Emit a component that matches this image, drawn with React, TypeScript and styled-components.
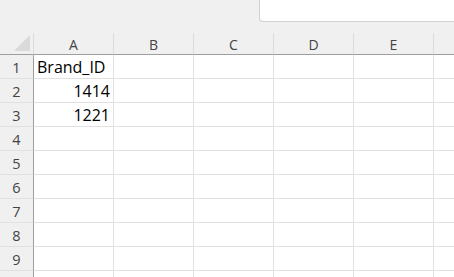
import React from "react"
import styled, { createGlobalStyle } from "styled-components"

const GlobalStyle = createGlobalStyle`
	html, body {
		margin: 0;
		padding: 0;
		background: #f0f0f0;
		overflow: hidden;
	}
	body {
		font-family: "Open Sans", "Noto Sans", sans-serif;
	}
`

// F is only partly on screen, its label falls outside the window
const columns = ["A", "B", "C", "D", "E", ""]
const rows: { [row: number]: { [col: string]: { value: string; numeric?: boolean } } } = {
	1: { A: { value: "Brand_ID" } },
	2: { A: { value: "1414", numeric: true } },
	3: { A: { value: "1221", numeric: true } },
}
const visibleRows = 9

export default function App() {
	return (
		<>
			<GlobalStyle />
			<Page>
				<TopBar>
					<FormulaBox />
				</TopBar>
				<Sheet>
					<Corner>
						<svg width="18" height="18" viewBox="0 0 18 18">
							<polygon points="17,1 17,17 1,17" fill="#dadada" />
						</svg>
					</Corner>
					{columns.map((c, i) => (
						<ColHeader key={`h-${i}`}>{c}</ColHeader>
					))}
					{Array.from({ length: visibleRows + 1 }, (_, i) => i + 1).map((r) => (
						<React.Fragment key={r}>
							<RowHeader>{r <= visibleRows ? r : ""}</RowHeader>
							{columns.map((c, i) => {
								const cell = rows[r] && rows[r][c]
								return (
									<Cell key={`${r}-${i}`} $numeric={!!(cell && cell.numeric)}>
										{cell ? cell.value : ""}
									</Cell>
								)
							})}
						</React.Fragment>
					))}
				</Sheet>
			</Page>
		</>
	)
}

const Page = styled.div`
	width: 454px;
	height: 277px;
	overflow: hidden;
	background: #f0f0f0;
`
const TopBar = styled.div`
	height: 33px;
	display: flex;
	justify-content: flex-end;
	align-items: flex-start;
`
const FormulaBox = styled.div`
	width: 200px;
	height: 22px;
	box-sizing: border-box;
	background: #ffffff;
	border-left: 1px solid #d1d1d1;
	border-bottom: 1px solid #d1d1d1;
	border-bottom-left-radius: 4px;
	margin-right: -5px;
`
const Sheet = styled.div`
	display: grid;
	grid-template-columns: 34px repeat(6, 80px);
	grid-template-rows: 22px;
	grid-auto-rows: 24px;
	background: #ffffff;
`
const Corner = styled.div`
	background: #f0f0f0;
	border-right: 1px solid #dcdcdc;
	border-bottom: 1px solid #9e9e9e;
	display: flex;
	justify-content: flex-end;
	align-items: flex-end;
	padding: 0 2px 2px 0;
	svg {
		display: block;
	}
`
const ColHeader = styled.div`
	background: #f0f0f0;
	border-right: 1px solid #dcdcdc;
	border-bottom: 1px solid #9e9e9e;
	display: flex;
	align-items: center;
	justify-content: center;
	font-size: 14px;
	color: #444444;
	padding-top: 1px;
`
const RowHeader = styled.div`
	background: #f0f0f0;
	border-right: 1px solid #9e9e9e;
	border-bottom: 1px solid #e1e1e1;
	display: flex;
	align-items: center;
	justify-content: center;
	font-size: 14.5px;
	color: #444444;
	padding-top: 1px;
`
const Cell = styled.div<{ $numeric: boolean }>`
	border-right: 1px solid #e1e1e1;
	border-bottom: 1px solid #e1e1e1;
	display: flex;
	align-items: flex-end;
	justify-content: ${(p) => (p.$numeric ? "flex-end" : "flex-start")};
	padding: 0 3px 0 3px;
	font-size: 16px;
	line-height: 22px;
	color: #000000;
	white-space: nowrap;
`
